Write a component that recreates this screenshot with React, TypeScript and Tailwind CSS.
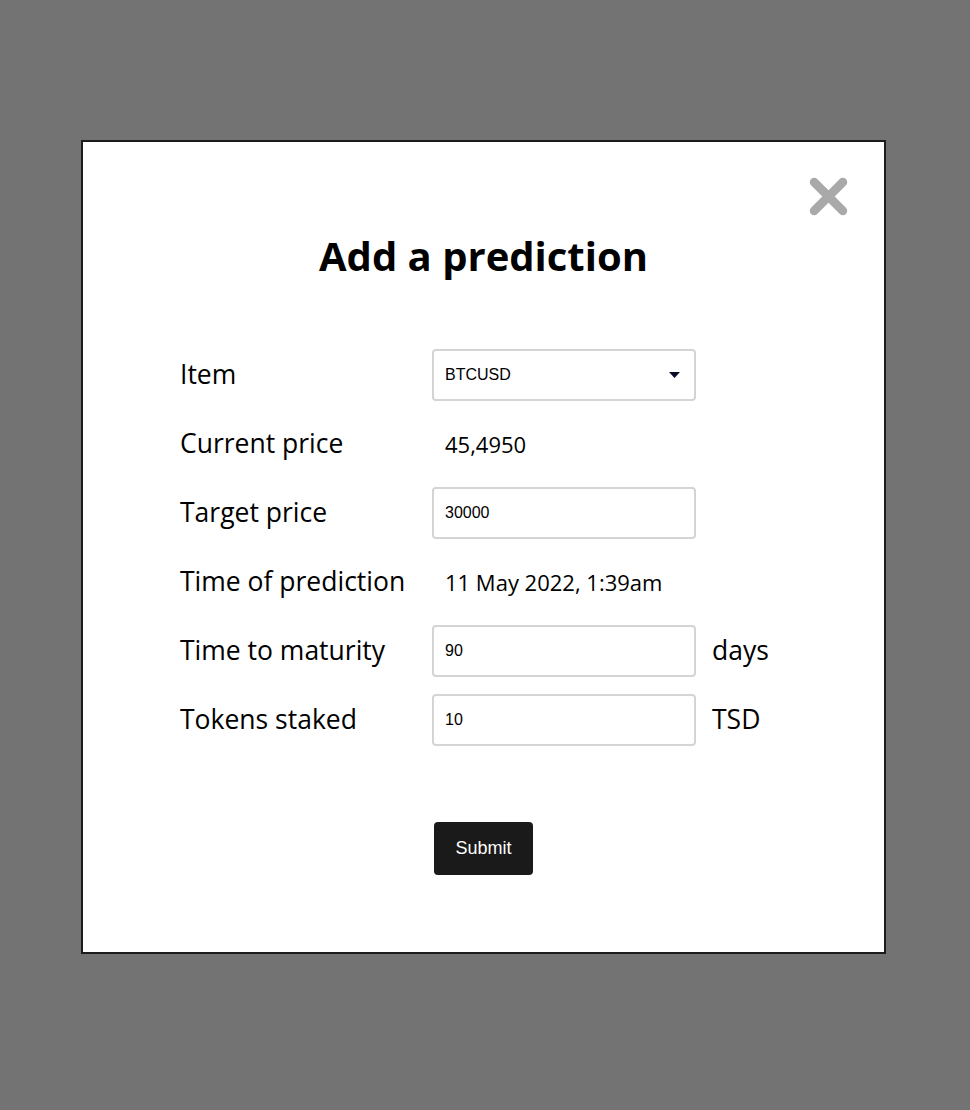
import { useState } from 'react';

const FIELD =
  "h-[52px] w-[264px] rounded-[4px] border-2 border-[#d4d4d4] bg-white px-[11px] text-[16px] text-black outline-none [font-family:'Liberation_Sans',Arial,sans-serif]";

export default function App() {
  const [item, setItem] = useState('BTCUSD');
  const [target, setTarget] = useState('30000');
  const [days, setDays] = useState('90');
  const [tokens, setTokens] = useState('10');

  return (
    <div className="h-[1110px] w-full bg-[#737373] pt-[140px] [font-family:'Open_Sans',sans-serif]">
      <div className="relative ml-[81px] h-[814px] w-[805px] border-2 border-[#1c1c1c] bg-white">
        {/* Close */}
        <button className="absolute right-[36px] top-[35px] h-[39px] w-[39px]" aria-label="Close">
          <svg viewBox="0 0 38 38" className="h-full w-full">
            <path d="M5 5 L33 33 M33 5 L5 33" stroke="#a9a9a9" strokeWidth="8.5" strokeLinecap="round" />
          </svg>
        </button>

        <h1 className="pt-[84px] text-center text-[40px] font-bold leading-[60px] text-black">Add a prediction</h1>

        {/* Form */}
        <div className="mt-[63px] grid grid-cols-[252px_264px_auto] gap-y-[17px] pl-[97px] text-black">
          <div className="flex h-[52px] items-center text-[26.5px]">Item</div>
          <div className="relative">
            <select
              value={item}
              onChange={(e) => setItem(e.target.value)}
              className={FIELD + ' appearance-none'}
            >
              <option>BTCUSD</option>
              <option>ETHUSD</option>
            </select>
            <svg className="pointer-events-none absolute right-[16px] top-[23px] h-[6px] w-[11px]" viewBox="0 0 11 6">
              <path d="M0 0 H11 L5.5 6 Z" fill="#0b0b2a" />
            </svg>
          </div>
          <div />

          <div className="flex h-[52px] items-center text-[26.5px]">Current price</div>
          <div className="flex items-center pl-[13px] text-[22px]">45,4950</div>
          <div />

          <div className="flex h-[52px] items-center text-[26.5px]">Target price</div>
          <input value={target} onChange={(e) => setTarget(e.target.value)} className={FIELD} />
          <div />

          <div className="flex h-[52px] items-center text-[26.5px]">Time of prediction</div>
          <div className="flex items-center whitespace-nowrap pl-[13px] text-[22px]">11 May 2022, 1:39am</div>
          <div />

          <div className="flex h-[52px] items-center text-[26.5px]">Time to maturity</div>
          <input value={days} onChange={(e) => setDays(e.target.value)} className={FIELD} />
          <div className="flex items-center pl-[16px] text-[26.5px]">days</div>

          <div className="flex h-[52px] items-center text-[26.5px]">Tokens staked</div>
          <input value={tokens} onChange={(e) => setTokens(e.target.value)} className={FIELD} />
          <div className="flex items-center pl-[16px] text-[26.5px]">TSD</div>
        </div>

        <div className="mt-[76px] flex justify-center">
          <button className="h-[53px] w-[99px] rounded-[4px] bg-[#1a1a1a] text-[18px] text-white [font-family:'Liberation_Sans',Arial,sans-serif]">
            Submit
          </button>
        </div>
      </div>
    </div>
  );
}
